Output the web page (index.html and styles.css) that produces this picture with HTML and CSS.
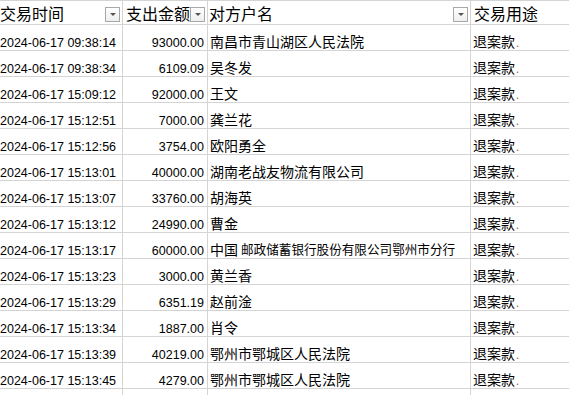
FILE: index.html
```html
<!DOCTYPE html>
<html lang="zh">
<head>
<meta charset="utf-8">
<title>交易明细</title>
<link rel="stylesheet" href="styles.css">
</head>
<body>
<div class="sheet">
  <div class="cell head col-a"><span>交易时间</span><span class="filter"></span></div>
  <div class="cell head col-b"><span>支出金额</span><span class="filter"></span></div>
  <div class="cell head col-c"><span>对方户名</span><span class="filter"></span></div>
  <div class="cell head col-d"><span>交易用途</span></div>

  <div class="cell date">2024-06-17 09:38:14</div><div class="cell num">93000.00</div><div class="cell cjk">南昌市青山湖区人民法院</div><div class="cell cjk use">退案款<span class="dot">.</span></div>
  <div class="cell date">2024-06-17 09:38:34</div><div class="cell num">6109.09</div><div class="cell cjk">吴冬发</div><div class="cell cjk use">退案款<span class="dot">.</span></div>
  <div class="cell date">2024-06-17 15:09:12</div><div class="cell num">92000.00</div><div class="cell cjk">王文</div><div class="cell cjk use">退案款<span class="dot">.</span></div>
  <div class="cell date">2024-06-17 15:12:51</div><div class="cell num">7000.00</div><div class="cell cjk">龚兰花</div><div class="cell cjk use">退案款<span class="dot">.</span></div>
  <div class="cell date">2024-06-17 15:12:56</div><div class="cell num">3754.00</div><div class="cell cjk">欧阳勇全</div><div class="cell cjk use">退案款<span class="dot">.</span></div>
  <div class="cell date">2024-06-17 15:13:01</div><div class="cell num">40000.00</div><div class="cell cjk">湖南老战友物流有限公司</div><div class="cell cjk use">退案款<span class="dot">.</span></div>
  <div class="cell date">2024-06-17 15:13:07</div><div class="cell num">33760.00</div><div class="cell cjk">胡海英</div><div class="cell cjk use">退案款<span class="dot">.</span></div>
  <div class="cell date">2024-06-17 15:13:12</div><div class="cell num">24990.00</div><div class="cell cjk">曹金</div><div class="cell cjk use">退案款<span class="dot">.</span></div>
  <div class="cell date">2024-06-17 15:13:17</div><div class="cell num">60000.00</div><div class="cell cjk">中国<span class="narrow">邮政储蓄银行股份有限公司鄂州市分行</span></div><div class="cell cjk use">退案款<span class="dot">.</span></div>
  <div class="cell date">2024-06-17 15:13:23</div><div class="cell num">3000.00</div><div class="cell cjk">黄兰香</div><div class="cell cjk use">退案款<span class="dot">.</span></div>
  <div class="cell date">2024-06-17 15:13:29</div><div class="cell num">6351.19</div><div class="cell cjk">赵前淦</div><div class="cell cjk use">退案款<span class="dot">.</span></div>
  <div class="cell date">2024-06-17 15:13:34</div><div class="cell num">1887.00</div><div class="cell cjk">肖令</div><div class="cell cjk use">退案款<span class="dot">.</span></div>
  <div class="cell date">2024-06-17 15:13:39</div><div class="cell num">40219.00</div><div class="cell cjk">鄂州市鄂城区人民法院</div><div class="cell cjk use">退案款<span class="dot">.</span></div>
  <div class="cell date">2024-06-17 15:13:45</div><div class="cell num">4279.00</div><div class="cell cjk">鄂州市鄂城区人民法院</div><div class="cell cjk use">退案款<span class="dot">.</span></div>

  <div class="cell tail"></div><div class="cell tail"></div><div class="cell tail"></div><div class="cell tail use"></div>
</div>
</body>
</html>
```

FILE: styles.css
```css
html, body {
  margin: 0;
  padding: 0;
  background: #ffffff;
  overflow: hidden;
}

.sheet {
  display: grid;
  grid-template-columns: 123px 85px 263px 1fr;
  grid-template-rows: 24px repeat(14, 26px) 6px;
  border-top: 1px solid #d4d4d4;
  width: 569px;
  color: #000;
}

.cell {
  box-sizing: border-box;
  border-right: 1px solid #d4d4d4;
  border-bottom: 1px solid #d4d4d4;
  display: flex;
  align-items: flex-end;
  white-space: nowrap;
  overflow: hidden;
  line-height: 1;
  min-width: 0;
}

.tail { border-bottom: none; }

.head {
  font-family: "Noto Sans CJK SC", "Noto Sans", sans-serif;
  font-size: 16px;
  padding-bottom: 3px;
}

.col-a { padding-left: 0; }
.col-b { padding-left: 3px; }
.col-c { padding-left: 1px; }
.col-d { padding-left: 3px; border-right: none; }

.filter {
  margin-left: auto;
  margin-right: 2px;
  margin-bottom: -1px;
  width: 15px;
  height: 15px;
  box-sizing: border-box;
  border: 1px solid #a8a8a8;
  background: linear-gradient(#ffffff, #eeeeee);
  flex: none;
  position: relative;
  align-self: flex-end;
}

.filter::after {
  content: "";
  position: absolute;
  left: 4px;
  top: 5px;
  border-left: 3px solid transparent;
  border-right: 3px solid transparent;
  border-top: 3px solid #555555;
}

.date,
.num {
  font-family: "Liberation Sans", Arial, sans-serif;
  font-size: 12.5px;
  padding-bottom: 1px;
}

.date { padding-left: 0; }

.num {
  justify-content: flex-end;
  padding-right: 3px;
}

.cjk {
  font-family: "Noto Sans CJK SC", "Noto Sans", sans-serif;
  font-size: 14px;
  padding-left: 2px;
  padding-bottom: 2px;
}

.use {
  padding-left: 2px;
  border-right: none;
}

.narrow {
  font-size: 12.6px;
  margin-left: 3px;
}

.dot {
  color: #9a6b2a;
  font-size: 11px;
  margin-left: 1px;
}
```
